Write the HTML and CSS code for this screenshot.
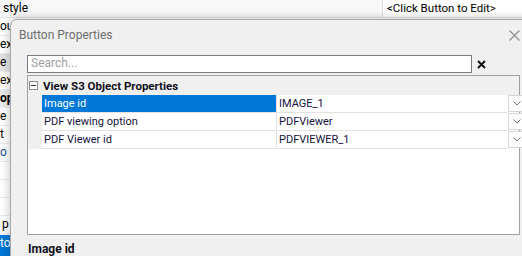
FILE: index.html
```html
<!DOCTYPE html>
<html>
<head>
<meta charset="utf-8">
<link rel="stylesheet" href="styles.css">
</head>
<body>
<div class="app">
  <div class="app-top">
    <div class="top-left">style</div>
    <div class="top-right">&lt;Click Button to Edit&gt;</div>
  </div>
  <ul class="app-list">
    <li>ou</li>
    <li>ex</li>
    <li class="hl">e</li>
    <li>ex</li>
    <li class="cat">op</li>
    <li>e</li>
    <li>t</li>
    <li class="link">o</li>
    <li></li>
    <li></li>
    <li></li>
    <li class="pad">p</li>
    <li class="sel">to</li>
  </ul>
</div>

<div class="dialog">
  <div class="titlebar">
    <span class="title">Button Properties</span>
    <svg class="close" width="11" height="11" viewBox="0 0 11 11"><path d="M0.5 0.5 L10.5 10.5 M10.5 0.5 L0.5 10.5" stroke="#8a8a8a" stroke-width="1.1" fill="none"/></svg>
  </div>
  <div class="dialog-body">
    <div class="search-row">
      <div class="search">Search...</div>
      <svg class="clear" width="9" height="9" viewBox="0 0 9 9"><path d="M1 1 L8 8 M8 1 L1 8" stroke="#111" stroke-width="2" fill="none"/></svg>
    </div>
    <div class="grid">
      <div class="cat-row">
        <span class="gutter"><svg width="9" height="9" viewBox="0 0 9 9"><rect x="0.5" y="0.5" width="8" height="8" fill="#fff" stroke="#8c8c8c"/><path d="M2 4.5 H7" stroke="#333" stroke-width="1"/></svg></span>
        <span class="cat-label">View S3 Object Properties</span>
      </div>
      <div class="prop-row selected">
        <span class="gutter"></span>
        <span class="name">Image id</span>
        <span class="value">IMAGE_1</span>
        <span class="dd"><svg width="8" height="5" viewBox="0 0 8 5"><path d="M0.5 0.5 L4 4 L7.5 0.5" stroke="#777" stroke-width="1" fill="none"/></svg></span>
      </div>
      <div class="prop-row">
        <span class="gutter"></span>
        <span class="name">PDF viewing option</span>
        <span class="value">PDFViewer</span>
        <span class="dd"><svg width="8" height="5" viewBox="0 0 8 5"><path d="M0.5 0.5 L4 4 L7.5 0.5" stroke="#777" stroke-width="1" fill="none"/></svg></span>
      </div>
      <div class="prop-row">
        <span class="gutter"></span>
        <span class="name">PDF Viewer id</span>
        <span class="value">PDFVIEWER_1</span>
        <span class="dd"><svg width="8" height="5" viewBox="0 0 8 5"><path d="M0.5 0.5 L4 4 L7.5 0.5" stroke="#777" stroke-width="1" fill="none"/></svg></span>
      </div>
    </div>
    <div class="desc-title">Image id</div>
  </div>
</div>
</body>
</html>
```
FILE: styles.css
```css
* { box-sizing: border-box; }
html, body {
  margin: 0;
  padding: 0;
}
body {
  width: 522px;
  height: 256px;
  overflow: hidden;
  position: relative;
  background: #ffffff;
  font-family: Roboto, "Noto Sans", sans-serif;
  font-size: 11px;
  color: #000;
}

/* background application */
.app-top {
  display: flex;
  height: 18px;
  line-height: 17px;
  border-bottom: 1px solid #e6e6e6;
}
.top-left {
  width: 383px;
  padding-left: 3px;
  background: #f8f8f8;
  border-right: 1px solid #dcdcdc;
  font-size: 12px;
}
.top-right {
  flex: 1;
  padding-left: 4px;
  font-size: 11.5px;
}
.app-list {
  list-style: none;
  margin: 0;
  padding: 0;
  width: 383px;
}
.app-list li {
  height: 18px;
  line-height: 17px;
  border-bottom: 1px solid #ececec;
  font-size: 12px;
  padding-left: 0;
}
.app-list li.hl { background: #e3e3e3; }
.app-list li.cat { background: #ececec; font-weight: 700; }
.app-list li.link { color: #1a4fa0; }
.app-list li.pad { padding-left: 2px; }
.app-list li.sel { background: #0078d7; color: #fff; height: 22px; margin-top: 1px; }

/* dialog window */
.dialog {
  position: absolute;
  left: 10px;
  top: 19px;
  width: 560px;
  height: 260px;
  background: #f0f0f0;
  border: 1px solid #a8a8a8;
  border-top-left-radius: 7px;
  box-shadow: 0 0 9px 2px rgba(0, 0, 0, 0.18);
  padding-right: 49px;
}
.titlebar {
  display: flex;
  align-items: flex-start;
  height: 32px;
  padding: 7px 0 0 8px;
}
.title {
  color: #6e6e6e;
  font-size: 12px;
  line-height: 16px;
}
.close {
  margin-left: auto;
  margin-top: 3px;
}
.dialog-body {
  padding: 3px 0 0 16px;
}
.search-row {
  display: flex;
  align-items: center;
  height: 18px;
}
.search {
  width: 445px;
  height: 18px;
  border: 1px solid #7a7a7a;
  background: #fff;
  color: #a0a0a0;
  font-size: 12px;
  line-height: 15px;
  padding-left: 3px;
}
.clear {
  margin-left: 5px;
  margin-top: 1px;
}
.grid {
  margin-top: 2px;
  height: 160px;
  border: 1px solid #a0a0a0;
  background: #fff;
}
.cat-row {
  display: flex;
  height: 19px;
  background: #f0f0f0;
  align-items: center;
}
.gutter {
  width: 14px;
  flex: none;
  align-self: stretch;
  background: #f0f0f0;
  display: flex;
  justify-content: center;
  align-items: center;
  padding-right: 4px;
}
.cat-label {
  font-weight: 700;
  font-size: 11.5px;
  padding-left: 1px;
  color: #101020;
}
.prop-row {
  display: flex;
  height: 18px;
  color: #14143c;
  font-size: 11px;
}
.prop-row .name {
  width: 235px;
  flex: none;
  padding-left: 2px;
  line-height: 17px;
  border-right: 1px solid #e2e2e2;
  border-bottom: 1px solid #e2e2e2;
}
.prop-row.selected .name {
  background: #0078d7;
  color: #fff;
}
.prop-row .value {
  width: 231px;
  flex: none;
  padding-left: 2px;
  line-height: 17px;
  border-bottom: 1px solid #e2e2e2;
}
.dd {
  width: 20px;
  flex: none;
  height: 17px;
  border: 1px solid #d6d6d6;
  border-right: none;
  background: #fdfdfd;
  display: flex;
  align-items: center;
  padding-left: 4px;
}
.desc-title {
  margin-top: 6px;
  padding-left: 1px;
  font-weight: 700;
  font-size: 12px;
  line-height: 16px;
  color: #101020;
}
```
